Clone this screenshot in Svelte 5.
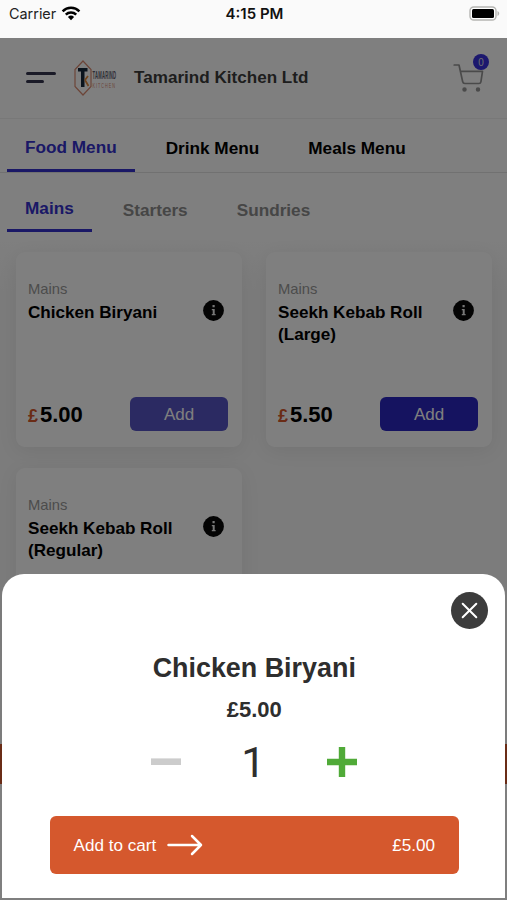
<script lang="ts">
	type Dish = { id: number; category: string; name: string; price: number };

	const menus = ['Food Menu', 'Drink Menu', 'Meals Menu'];
	const categories = ['Mains', 'Starters', 'Sundries'];
	const dishes: Dish[] = [
		{ id: 1, category: 'Mains', name: 'Chicken Biryani', price: 5 },
		{ id: 2, category: 'Mains', name: 'Seekh Kebab Roll (Large)', price: 5.5 },
		{ id: 3, category: 'Mains', name: 'Seekh Kebab Roll (Regular)', price: 5.5 }
	];

	let menu = $state('Food Menu');
	let category = $state('Mains');
	let selected = $state<Dish | null>(dishes[0]);
	let quantity = $state(1);
	let cartCount = $state(0);

	let total = $derived(selected ? (selected.price * quantity).toFixed(2) : '0.00');

	function open(dish: Dish) {
		selected = dish;
		quantity = 1;
	}

	function addToCart() {
		cartCount += quantity;
		selected = null;
	}
</script>

<div class="screen">
	<div class="status">
		<div class="carrier">
			<span>Carrier</span>
			<svg width="20" height="15" viewBox="0 0 20 15" fill="none" stroke="#000" stroke-width="2.5">
				<path d="M1.6 5.3a12 12 0 0 1 16.8 0" />
				<path d="M4.8 8.7a7.4 7.4 0 0 1 10.4 0" />
				<path d="M10 14.2 6.9 11a4.5 4.5 0 0 1 6.2 0z" fill="#000" stroke="none" />
			</svg>
		</div>
		<span class="time">4:15 PM</span>
		<svg class="battery" width="31" height="15" viewBox="0 0 31 15">
			<rect x="1" y="1" width="26" height="13" rx="3.8" fill="#fff" stroke="#b5b5b2" stroke-width="1.4" />
			<rect x="3" y="3" width="22" height="9" rx="1.5" fill="#000" />
			<path d="M28.5 5v5c1-.4 1.7-1.4 1.7-2.5S29.5 5.4 28.5 5z" fill="#b5b5b2" />
		</svg>
	</div>

	<div class="page">
		<header>
			<button class="burger" aria-label="Menu"><i></i><i class="short"></i></button>
			<svg class="logo" width="44" height="38" viewBox="0 0 44 38">
				<path d="M9 2 17 10.5V27.5L9 36 1 27.5V10.5z" fill="none" stroke="#d98a70" stroke-width="1.2" />
				<path d="M4 9h9.5v3.5H10.5V28H7V12.5H4z" fill="#16283a" />
				<path d="M11 21l3-4M11 21l3.500 6" fill="none" stroke="#e28a3c" stroke-width="1.8" />
				<text transform="translate(18.500 20) scale(0.380 1)" class="logo-top">TAMARIND</text>
				<text transform="translate(18.500 28.500) scale(0.500 1)" class="logo-bottom">KITCHEN</text>
			</svg>
			<h1>Tamarind Kitchen Ltd</h1>
			<button class="cart" aria-label="Cart">
				<svg width="32" height="30" viewBox="0 0 32 30" fill="none" stroke="#959595" stroke-width="1.7" stroke-linecap="round" stroke-linejoin="round">
					<path d="M1.2 2H6L9.7 18.8Q10.1 20.5 11.8 20.5H26Q27.6 20.5 27.9 18.8L29.5 8.3H7.4" />
					<circle cx="11.500" cy="26.500" r="1.400" fill="#959595" />
					<circle cx="25" cy="26.500" r="1.400" fill="#959595" />
				</svg>
				<span class="badge">{cartCount}</span>
			</button>
		</header>

		<nav class="tabs menus">
			{#each menus as item (item)}
				<button class:active={menu === item} onclick={() => (menu = item)}>{item}</button>
			{/each}
		</nav>
		<nav class="tabs categories">
			{#each categories as item (item)}
				<button class:active={category === item} onclick={() => (category = item)}>{item}</button>
			{/each}
		</nav>

		<main>
			{#each dishes as dish (dish.id)}
				<article>
					<span class="category">{dish.category}</span>
					<div class="title">
						<h2>{dish.name}</h2>
						<svg width="21" height="21" viewBox="0 0 21 21">
							<circle cx="10.5" cy="10.5" r="10.4" fill="#080808" />
							<path d="M9.500 5h2.200v2.200H9.500zM8.800 9h2.900v4.900h.9v1.300H8.800v-1.300h.9v-3.600h-.9z" fill="#eee" />
						</svg>
					</div>
					<div class="buy">
						<span class="price"><b>£</b>{dish.price.toFixed(2)}</span>
						<button class="add" class:pressed={selected?.id === dish.id} onclick={() => open(dish)}>Add</button>
					</div>
				</article>
			{/each}
		</main>
		<div class="basket-bar"></div>
	</div>

	{#if selected}
		<div class="backdrop">
			<section class="sheet">
				<button class="close" aria-label="Close" onclick={() => (selected = null)}>
					<svg width="17" height="17" viewBox="0 0 17 17" fill="none" stroke="#fff" stroke-width="2" stroke-linecap="round">
						<path d="M1.7 1.7l13.6 13.6M15.3 1.7L1.7 15.3" />
					</svg>
				</button>
				<h3>{selected.name}</h3>
				<span class="unit">£{selected.price.toFixed(2)}</span>
				<div class="stepper">
					<button aria-label="Less" onclick={() => (quantity = Math.max(1, quantity - 1))}>
						<svg width="30" height="30" viewBox="0 0 30 30"><path d="M0 11.4h30v6.6H0z" fill="#ccc" /></svg>
					</button>
					<span>{quantity}</span>
					<button aria-label="More" onclick={() => (quantity += 1)}>
						<svg width="30" height="30" viewBox="0 0 30 30"><path d="M11.8 0h6.4v11.8H30v6.4H18.2V30h-6.4V18.2H0v-6.4h11.8z" fill="#50aa38" /></svg>
					</button>
				</div>
				<button class="order" onclick={addToCart}>
					<span>Add to cart</span>
					<svg width="36" height="22" viewBox="0 0 36 22" fill="none" stroke="#fff" stroke-width="2.5" stroke-linecap="round" stroke-linejoin="round">
						<path d="M1.5 11H34M25 2l9 9-9 9" />
					</svg>
					<span class="total">£{total}</span>
				</button>
			</section>
		</div>
	{/if}
</div>

<style>
	:global(body) {
		margin: 0;
	}

	.screen {
		position: relative;
		height: 900px;
		overflow: hidden;
		display: flex;
		flex-direction: column;
		font-family: 'Liberation Sans', Arial, sans-serif;
		background: #fff;
	}

	button {
		padding: 0;
		border: none;
		background: none;
		font: inherit;
		cursor: pointer;
	}

	h1,
	h2,
	h3 {
		margin: 0;
	}

	svg {
		display: block;
		flex: none;
	}

	.status {
		display: grid;
		grid-template-columns: 1fr auto 1fr;
		align-items: center;
		box-sizing: border-box;
		height: 38px;
		padding: 0 7px 12px 9px;
		background: #fafafa;
		font-family: Inter, sans-serif;
		font-size: 14.4px;
		color: #222;
	}

	.carrier {
		display: flex;
		align-items: center;
		gap: 5px;
	}

	.time {
		font-weight: 600;
		font-size: 15px;
		color: #111;
	}

	.battery {
		justify-self: end;
	}

	.page {
		flex: 1;
		display: flex;
		flex-direction: column;
		min-height: 0;
		overflow: hidden;
	}

	header {
		display: flex;
		align-items: center;
		box-sizing: border-box;
		height: 81px;
		flex: none;
		padding: 0 22px 1px 26px;
		border-bottom: 1px solid #f0f0f0;
	}

	.burger {
		display: flex;
		flex-direction: column;
		gap: 5px;
		width: 30px;
		margin-right: 18px;
	}

	.burger i {
		height: 3px;
		border-radius: 2px;
		background: #34344f;
	}

	.burger .short {
		width: 18px;
	}

	.logo {
		margin-right: 16px;
	}

	.logo-top {
		font-size: 11px;
		font-weight: bold;
		letter-spacing: 0.6px;
		fill: #5c5c6c;
	}

	.logo-bottom {
		font-size: 7.5px;
		letter-spacing: 2px;
		fill: #d98a70;
	}

	h1 {
		padding-top: 1px;
		font-size: 17.1px;
		color: #3c3c3c;
	}

	.cart {
		position: relative;
		margin-left: auto;
	}

	.badge {
		position: absolute;
		top: -9px;
		right: -4px;
		width: 16px;
		height: 16px;
		border-radius: 50%;
		background: #3830dc;
		color: #ddd;
		font-size: 10px;
		line-height: 17px;
	}

	.tabs {
		display: flex;
		flex: none;
		box-sizing: border-box;
		padding-left: 7px;
		font-size: 17.2px;
		font-weight: bold;
	}

	.tabs button {
		box-sizing: border-box;
		padding: 6px 18px 0;
	}

	.tabs .active {
		color: #3430cc;
		border-bottom: 3px solid #3430cc;
	}

	.menus {
		height: 54px;
		gap: 13px;
		border-bottom: 1px solid #e2e2e2;
	}

	.menus .active {
		padding-top: 7px;
	}

	.categories {
		height: 59px;
		gap: 13px;
	}

	.categories button {
		padding-top: 15px;
		color: #8c8c8c;
	}

	main {
		display: grid;
		grid-template-columns: 226px 226px;
		grid-auto-rows: 195px;
		gap: 21px 24px;
		flex: none;
		height: 492px;
		padding: 20px 0 0 16px;
		background: linear-gradient(#fff, #f8f8f8 60px);
	}

	article {
		display: flex;
		flex-direction: column;
		box-sizing: border-box;
		padding: 28px 14px 16px 12px;
		border-radius: 9px;
		background: #fff;
		box-shadow: 0 4px 20px rgba(0, 0, 0, 0.07);
	}

	.category {
		font-size: 14.8px;
		line-height: 19px;
		color: #999;
	}

	.title {
		display: flex;
		align-items: flex-start;
		justify-content: space-between;
		margin-top: 3px;
		padding-right: 4px;
	}

	.title svg {
		margin-top: -2px;
	}

	h2 {
		width: 155px;
		font-size: 17.1px;
		line-height: 22px;
		color: #000;
	}

	.buy {
		display: flex;
		align-items: center;
		justify-content: space-between;
		margin-top: auto;
	}

	.price {
		padding-top: 1px;
		font-size: 22px;
		font-weight: bold;
		color: #000;
	}

	.price b {
		margin-right: 2px;
		font-size: 18px;
		color: #d5582d;
	}

	.add {
		width: 98px;
		height: 34px;
		padding-top: 1px;
		border-radius: 6px;
		background: #2a26c0;
		color: #fff;
		font-size: 17px;
	}

	.pressed {
		background: #5654c4;
	}

	.basket-bar {
		flex: none;
		height: 40px;
		background: #d5582d;
	}

	.backdrop {
		position: absolute;
		inset: 38px 0 0;
		display: flex;
		align-items: flex-end;
		padding: 0 2px 2px;
		background: rgba(0, 0, 0, 0.5);
	}

	.sheet {
		flex: 1;
		display: flex;
		flex-direction: column;
		align-items: center;
		box-sizing: border-box;
		height: 324px;
		padding: 18px 46px 24px 47.5px;
		border-radius: 22px 22px 0 0;
		background: #fff;
		color: #2e2e2e;
	}

	.close {
		display: grid;
		place-items: center;
		align-self: flex-end;
		width: 37px;
		height: 37px;
		margin-right: -28.5px;
		border-radius: 50%;
		background: #3c3c3c;
	}

	h3 {
		margin-top: 23px;
		font-size: 26.9px;
		line-height: 32px;
	}

	.unit {
		margin-top: 13px;
		font-size: 22px;
		line-height: 26px;
		font-weight: bold;
	}

	.stepper {
		display: flex;
		align-items: center;
		justify-content: space-between;
		width: 206px;
		height: 60px;
		margin-top: 9px;
	}

	.stepper span {
		margin-right: 2px;
		font-family: Roboto, sans-serif;
		font-size: 43px;
	}

	.order {
		display: flex;
		align-items: center;
		width: 100%;
		height: 58px;
		margin-top: auto;
		padding: 1px 24px 0;
		border-radius: 6px;
		background: #d5582d;
		color: #fff;
		font-size: 17.1px;
	}

	.order svg {
		margin: -1px 0 0 11px;
	}

	.total {
		margin-left: auto;
	}
</style>
